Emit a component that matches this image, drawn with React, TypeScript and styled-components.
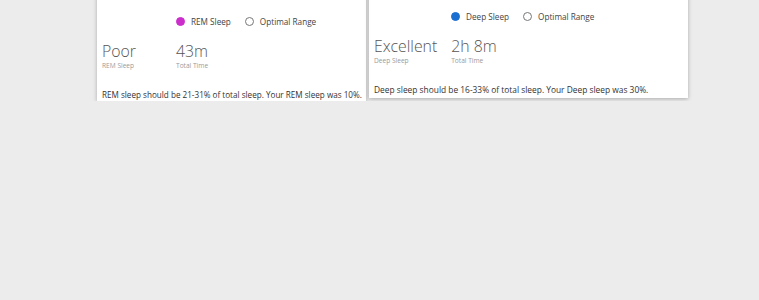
import React from "react";
import styled, {createGlobalStyle} from "styled-components";

const Global = createGlobalStyle`
  html, body {
    margin: 0;
    padding: 0;
    background: #ececec;
    font-family: "Open Sans", "Liberation Sans", sans-serif;
    overflow: hidden;
  }
`;

const Row = styled.div`
  display: flex;
  align-items: flex-start;
  gap: 3px;
  padding-left: 97px;
  margin-top: -40px;
`;

const Card = styled.div<{w: number; pb: number}>`
  width: ${p => p.w}px;
  background: #fff;
  box-shadow: 0 1px 4px rgba(0, 0, 0, .28);
  padding: 0 5px ${p => p.pb}px;
  box-sizing: border-box;
`;

const Chart = styled.div<{h: number}>`
  height: ${p => p.h}px;
  display: flex;
  align-items: flex-end;
`;

const Axis = styled.div`
  flex: 1;
  display: flex;
  justify-content: space-between;
  padding: 0 26px 0 0;
  font-size: 8px;
  line-height: 10px;
  color: #666;
`;

const Legend = styled.div<{pl: number}>`
  display: flex;
  align-items: center;
  gap: 14px;
  height: 14px;
  margin-top: 12px;
  padding-left: ${p => p.pl}px;
  font-size: 8.2px;
  color: #444;
`;

const Key = styled.span`
  display: flex;
  align-items: center;
  gap: 6px;
`;

const Dot = styled.span<{color?: string}>`
  width: 9px;
  height: 9px;
  border-radius: 50%;
  box-sizing: border-box;
  background: ${p => p.color || "#fff"};
  border: 1px solid ${p => p.color || "#777"};
`;

const Stats = styled.div`
  display: flex;
  gap: 14px;
  margin-top: 14px;
`;

const Stat = styled.div<{w?: number}>`
  min-width: ${p => p.w || 0}px;
  display: flex;
  flex-direction: column;
`;

const Value = styled.span`
  font-size: 15.8px;
  font-weight: 300;
  line-height: 19px;
  color: #555;
`;

const Label = styled.span`
  font-size: 6.6px;
  line-height: 9px;
  color: #9a9a9a;
`;

const Note = styled.p<{size: number}>`
  margin: 19px 0 0;
  font-size: ${p => p.size}px;
  line-height: 11px;
  color: #333;
  white-space: nowrap;
`;

function SleepCard(props: {
  w: number; pb: number; chart: number; pl: number; color: string; noteSize: number;
  stage: string; score: string; scoreW: number; time: string; note: string; ticks: string[];
}) {
  return (
    <Card w={props.w} pb={props.pb}>
      <Chart h={props.chart}>
        <Axis>{props.ticks.map((t, i) => <span key={i}>{t}</span>)}</Axis>
      </Chart>
      <Legend pl={props.pl}>
        <Key><Dot color={props.color}/>{props.stage}</Key>
        <Key><Dot/>Optimal Range</Key>
      </Legend>
      <Stats>
        <Stat w={props.scoreW}>
          <Value>{props.score}</Value>
          <Label>{props.stage}</Label>
        </Stat>
        <Stat>
          <Value>{props.time}</Value>
          <Label>Total Time</Label>
        </Stat>
      </Stats>
      <Note size={props.noteSize}>{props.note}</Note>
    </Card>
  );
}

export default function App() {
  return (
    <>
      <Global/>
      <Row>
        <SleepCard w={269} pb={1} chart={42} pl={74} color="#cc2ecc" noteSize={8.15}
                   stage="REM Sleep" score="Poor" scoreW={60} time="43m"
                   ticks={["0", "11:00 PM", "2:00 AM"]}
                   note="REM sleep should be 21-31% of total sleep. Your REM sleep was 10%."/>
        <SleepCard w={319} pb={3} chart={37} pl={77} color="#1b6fd1" noteSize={8.4}
                   stage="Deep Sleep" score="Excellent" scoreW={63} time="2h 8m"
                   ticks={[]}
                   note="Deep sleep should be 16-33% of total sleep. Your Deep sleep was 30%."/>
      </Row>
    </>
  );
}
